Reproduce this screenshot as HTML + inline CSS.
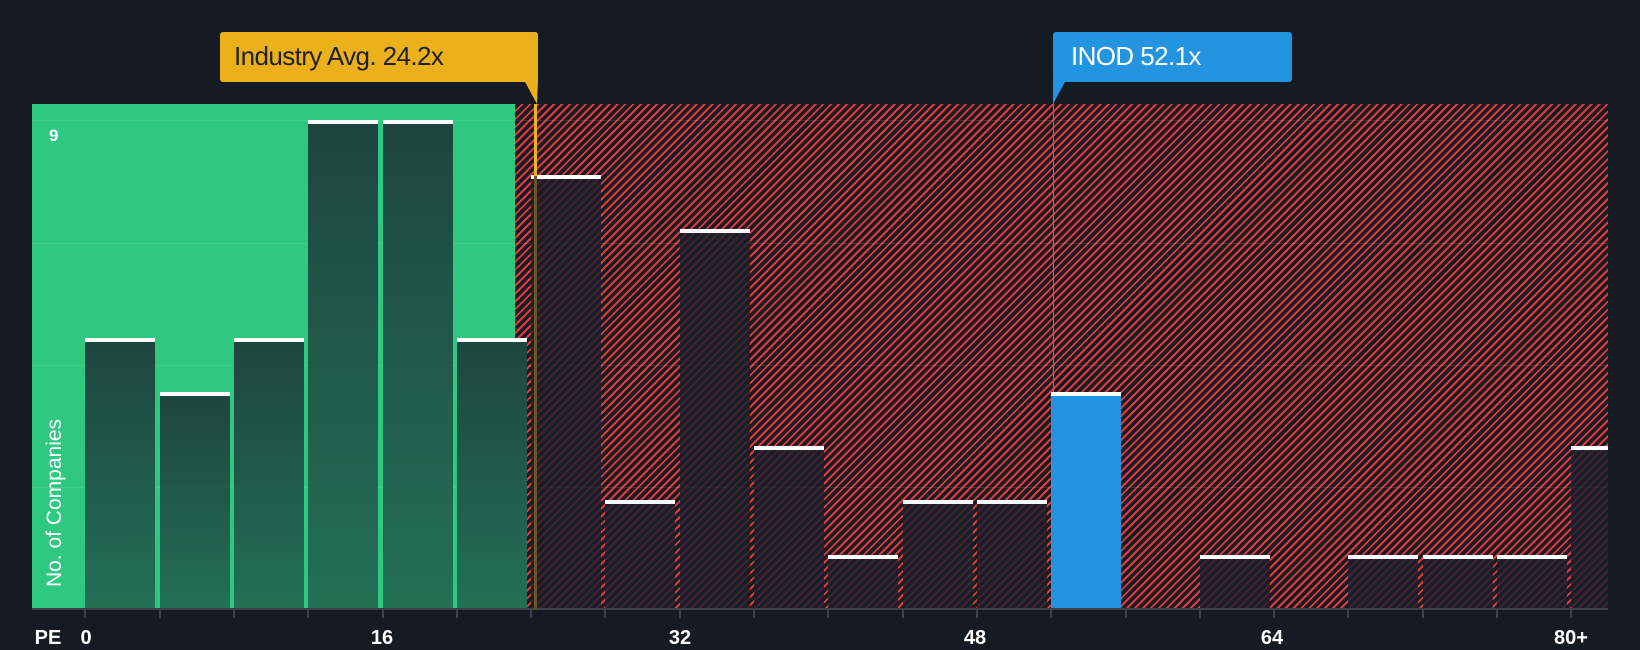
<!DOCTYPE html>
<html><head><style>
body{margin:0;width:1640px;height:650px;background:#151b23;position:relative;overflow:hidden;font-family:"Liberation Sans",sans-serif}
.a{position:absolute}
.hatch{background:#161b24 repeating-linear-gradient(-45deg,#161b24 0 3.6px,#e0393c 3.6px 5.6px);}
.bar{position:absolute;border-top:4px solid #fff;box-sizing:border-box}
.g{background:linear-gradient(#1e4540,#237055)}
.r{background:rgba(26,30,42,0.78)}
.grid{position:absolute;left:32px;width:1576px;height:1px;background:rgba(255,255,255,0.1)}
.t{position:absolute;top:609px;width:2px;height:9px;background:#3c424c}
.lbl{position:absolute;top:627px;color:#fff;font-size:20px;font-weight:bold;transform:translateX(-50%)}
</style></head><body>
<div class="a hatch" style="left:515px;top:104px;width:1093px;height:505px"></div>
<div class="a" style="left:32px;top:104px;width:483px;height:505px;background:#2ec880"></div>
<div class="grid" style="top:120px"></div><div class="grid" style="top:243px"></div><div class="grid" style="top:365px"></div><div class="grid" style="top:487px"></div>
<div id="bars"></div>
<div class="a" style="left:32px;top:608px;width:1576px;height:2px;background:#3c424c"></div>
<div class="a" style="left:534px;top:104px;width:3px;height:72px;background:#f0b31a"></div>
<div class="a" style="left:534px;top:176px;width:3px;height:433px;background:#6a5526"></div>
<div class="a" style="left:1053px;top:82px;width:1px;height:310px;background:#2996e0"></div>
<div class="a" style="left:220px;top:32px;width:318px;height:50px;background:#ecb11a;border-radius:3px"></div>
<svg class="a" style="left:520px;top:80px" width="20" height="26"><polygon points="4,0 18,0 17,24" fill="#ecb11a"/></svg>
<div class="a" style="left:234px;top:41px;font-size:26px;color:#1e2026;letter-spacing:-0.6px">Industry Avg. 24.2x</div>
<div class="a" style="left:1053px;top:32px;width:239px;height:50px;background:#2394e0;border-radius:3px"></div>
<svg class="a" style="left:1052px;top:80px" width="16" height="26"><polygon points="1,0 14,0 1,24" fill="#2394e0"/></svg>
<div class="a" style="left:1071px;top:41px;font-size:26px;color:#fff;letter-spacing:-0.6px">INOD 52.1x</div>
<div class="a" style="left:49px;top:126px;color:#fff;font-size:17px;font-weight:bold">9</div>
<div class="a" style="left:55px;top:503px;color:#fff;font-size:21px;transform:translate(-50%,-50%) rotate(-90deg);white-space:nowrap">No. of Companies</div>
<div class="lbl" style="left:48px">PE</div>
<div class="lbl" style="left:86px">0</div>
<div class="lbl" style="left:382px">16</div>
<div class="lbl" style="left:680px">32</div>
<div class="lbl" style="left:975px">48</div>
<div class="lbl" style="left:1272px">64</div>
<div class="lbl" style="left:1571px">80+</div>
<script>
(function(){
var v=[5,4,5,9,9,5,8,2,7,3,1,2,2,4,0,1,0,1,1,1,3],h='';
for(var i=0;i<v.length;i++){var x=85.3+74.3*i,w=70;if(i==20)w=1608-x;
h+='<div class="t" style="left:'+(x-1)+'px"></div>';
if(!v[i])continue;var yt=609-54.3*v[i];
var c=i<6?'g':(i==13?'':'r');var st=i==13?'background:#2394e0;':'';
h+='<div class="bar '+c+'" style="'+st+'left:'+x+'px;width:'+w+'px;top:'+yt+'px;height:'+(609-yt)+'px"></div>';}
document.getElementById('bars').innerHTML=h;
})();
</script>
</body></html>
